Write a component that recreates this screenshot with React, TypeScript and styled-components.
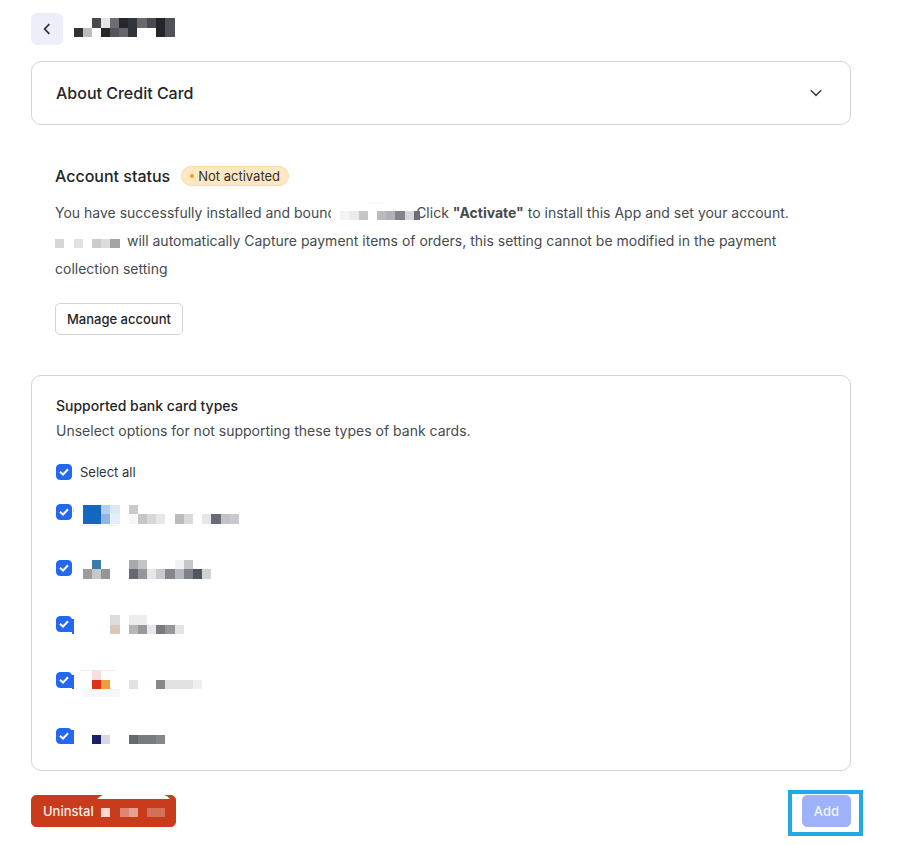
import React, { useState } from 'react';
import styled, { createGlobalStyle } from 'styled-components';

const GlobalStyle = createGlobalStyle`
  *, *::before, *::after { box-sizing: border-box; }
  body {
    margin: 0;
    background: #fff;
    color: #242628;
    font-family: Inter, "Liberation Sans", sans-serif;
    font-size: 14px;
    line-height: 20px;
  }
  button { font: inherit; cursor: pointer; }
`;

/* x, y, width, height, fill */
type Cell = [number, number, number, number, string];

const MosaicSvg = styled.svg`
  display: block;
  flex: none;
  overflow: visible;
`;

function Mosaic({ width, height, cells, className }: { width: number; height: number; cells: Cell[]; className?: string }) {
  return (
    <MosaicSvg className={className} width={width} height={height} shapeRendering="crispEdges" aria-hidden="true">
      {cells.map(([x, y, w, h, fill], i) => (
        <rect key={i} x={x} y={y} width={w} height={h} fill={fill} />
      ))}
    </MosaicSvg>
  );
}

const titleCells: Cell[] = [
  [18, 0, 9, 10, '#49494b'], [27, 0, 9, 10, '#e4e4e8'], [36, 0, 9, 10, '#6d6d72'], [45, 0, 9, 10, '#26282d'],
  [54, 0, 9, 10, '#323539'], [63, 0, 10, 10, '#6a6a6c'], [73, 0, 9, 10, '#494b4e'], [82, 0, 9, 19, '#23252a'],
  [91, 0, 10, 19, '#505257'], [0, 10, 9, 9, '#323232'], [9, 10, 9, 9, '#bbbcbc'], [27, 10, 9, 9, '#27272a'],
  [36, 10, 9, 9, '#54545c'], [45, 10, 9, 9, '#66666d'], [54, 10, 9, 9, '#303337'],
];

const boundCells: Cell[] = [
  [0, 0, 84, 18, '#fff'],
  [37, 0, 16, 2, '#fafafa'], [9, 9, 9, 9, '#f3f3f4'], [18, 9, 10, 9, '#ebebec'], [28, 9, 9, 9, '#c5c5c6'],
  [46, 9, 9, 9, '#bbbbbc'], [55, 9, 9, 9, '#b0b1b3'], [64, 9, 10, 9, '#838389'], [74, 9, 9, 9, '#d7d8de'],
  [83, 9, 6, 9, '#6c6c74'],
];

const appCells: Cell[] = [
  [0, 0, 9, 9, '#d6d6d6'], [19, 0, 9, 9, '#e2e2e2'], [37, 0, 9, 9, '#cacbcd'], [46, 0, 9, 9, '#dcdcdd'],
  [55, 0, 10, 9, '#a3a4a8'],
];

const uninstallCells: Cell[] = [
  [6, 0, 9, 9, '#fbd9d0'], [25, 0, 9, 9, '#dd8674'], [34, 0, 9, 9, '#e3a093'], [52, 0, 18, 9, '#d3705a'],
];

const cards: { id: string; name: string; cells: Cell[] }[] = [
  {
    id: 'card-1',
    name: 'Card type 1',
    cells: [
      [1, 8, 1, 4, '#d4d4d6'],
      [11, 5, 18, 19, '#1467c0'], [29, 5, 9, 9, '#b5cff0'], [38, 5, 10, 9, '#dfe7f3'], [29, 14, 9, 10, '#92b4e3'],
      [38, 14, 10, 10, '#e3f0fc'], [8, 25, 36, 1, '#f3f6f8'], [57, 5, 9, 9, '#c9c9ca'], [57, 14, 9, 10, '#f6f6f6'],
      [66, 14, 9, 10, '#c6c6c8'], [75, 14, 9, 10, '#d8d8d8'], [84, 14, 9, 10, '#e7e7e8'], [103, 14, 9, 10, '#babbbc'],
      [112, 14, 9, 10, '#d8d9d9'], [130, 14, 9, 10, '#e5e6e8'], [139, 14, 10, 10, '#696b76'], [149, 14, 9, 10, '#c2c3c8'],
      [158, 14, 9, 10, '#c8c9cb'],
    ],
  },
  {
    id: 'card-2',
    name: 'Card type 2',
    cells: [
      [20, 4, 9, 9, '#387aaa'], [11, 13, 9, 10, '#9c9c9c'], [20, 13, 9, 10, '#c8c8c9'], [29, 13, 9, 10, '#959596'],
      [57, 4, 9, 9, '#a7a8ab'], [66, 4, 9, 9, '#c3c4c5'], [103, 4, 9, 9, '#f1f2f3'], [112, 4, 9, 9, '#c5c7c8'],
      [57, 13, 9, 10, '#666a70'], [66, 13, 9, 10, '#94969b'], [75, 13, 9, 10, '#e5e6e8'], [84, 13, 9, 10, '#c9cacd'],
      [93, 13, 10, 10, '#85858b'], [103, 13, 9, 10, '#b5b7bb'], [112, 13, 9, 10, '#7b828a'], [121, 13, 9, 10, '#50555f'],
      [130, 13, 9, 10, '#d0d1d3'],
    ],
  },
  {
    id: 'card-3',
    name: 'Card type 3',
    cells: [
      [-3, 7, 5, 13, '#2468f2'], [0, 20, 2, 2, '#2468f2'],
      [38, 3, 10, 10, '#dcdcdd'], [38, 13, 10, 9, '#dbc8b9'], [57, 3, 18, 10, '#ededee'], [57, 13, 9, 9, '#b6b6b9'],
      [66, 13, 9, 9, '#97989d'], [75, 13, 9, 9, '#e5e7e9'], [84, 13, 9, 9, '#787b82'], [93, 13, 10, 9, '#96979b'],
      [103, 13, 9, 9, '#e3e3e5'],
    ],
  },
  {
    id: 'card-4',
    name: 'Card type 4',
    cells: [
      [-3, 7, 5, 13, '#2468f2'], [0, 20, 2, 1, '#2468f2'],
      [8, 2, 36, 1, '#f6eeee'], [20, 2, 9, 10, '#f8dede'], [20, 12, 9, 9, '#db321a'], [29, 12, 9, 9, '#f29b3b'],
      [11, 21, 37, 8, '#f7f7f8'], [57, 12, 9, 9, '#e0e1e2'], [84, 12, 9, 9, '#858989'], [93, 12, 28, 9, '#e0e1e2'],
      [121, 12, 9, 9, '#efeff0'],
    ],
  },
  {
    id: 'card-5',
    name: 'Card type 5',
    cells: [
      [-3, 6, 5, 14, '#2468f2'],
      [20, 11, 9, 9, '#192064'], [29, 11, 9, 9, '#d8d8e4'], [57, 11, 9, 9, '#666a6d'], [66, 11, 18, 9, '#777b82'],
      [84, 11, 9, 9, '#868888'],
    ],
  },
];

const Page = styled.main`
  padding: 13px 50px 18px 31px;
`;

const Header = styled.header`
  display: flex;
  align-items: center;
  gap: 11px;
  margin-bottom: 16px;
`;

const BackButton = styled.button`
  display: grid;
  place-items: center;
  width: 32px;
  height: 32px;
  padding: 0;
  border: 0;
  border-radius: 6px;
  background: #eceff8;
`;

const Title = styled.h1`
  margin: 0 0 3px;
`;

const Panel = styled.section`
  border: 1px solid #d4d5d8;
  border-radius: 10px;
`;

const AboutToggle = styled.button`
  display: flex;
  align-items: center;
  justify-content: space-between;
  width: 100%;
  padding: 19px 28px 19px 24px;
  border: 0;
  background: none;
  color: inherit;
  font-size: 16px;
  font-weight: 500;
  line-height: 24px;
`;

const Account = styled.section`
  padding: 39px 24px 40px;
`;

const AccountHeading = styled.div`
  display: flex;
  align-items: center;
  gap: 11px;
  margin-bottom: 11px;
`;

const Heading = styled.h2`
  margin: 0;
  font-size: 16px;
  font-weight: 500;
  line-height: 24px;
`;

const Badge = styled.span`
  display: inline-flex;
  align-items: center;
  gap: 4px;
  height: 20px;
  padding: 0 8px;
  border: 1px solid #f9dba5;
  border-radius: 10px;
  background: #fde8c1;
  color: #33312f;
  font-size: 13px;
`;

const Dot = styled.span`
  width: 4px;
  height: 4px;
  border-radius: 50%;
  background: #f5962a;
`;

const Description = styled.p`
  margin: 0 0 20px;
  color: #474a4e;
  line-height: 28px;
`;

const BoundMosaic = styled(Mosaic)`
  display: inline-block;
  position: relative;
  margin: 0 0 0 -5px;
  vertical-align: -2px;
`;

const AppMosaic = styled(Mosaic)`
  display: inline-block;
  margin-right: 3px;
  vertical-align: -2px;
`;

const Button = styled.button<{ $tone: 'plain' | 'danger' | 'primary' }>`
  display: inline-flex;
  align-items: center;
  height: 32px;
  padding: 0 11px;
  border: 1px solid ${({ $tone }) => ({ plain: '#d0d3d9', danger: '#c83b1b', primary: '#9db2fa' })[$tone]};
  border-radius: 5px;
  background: ${({ $tone }) => ({ plain: '#fff', danger: '#c83b1b', primary: '#9db2fa' })[$tone]};
  color: ${({ $tone }) => ({ plain: '#242628', danger: '#fdeeea', primary: '#f1f4ff' })[$tone]};
  font-size: 13px;
  font-weight: 500;
`;

const CardTypes = styled(Panel)`
  padding: 17px 24px 22px;
`;

const SmallHeading = styled.h2`
  margin: 0;
  font-size: 14px;
  font-weight: 500;
  line-height: 25px;
`;

const Hint = styled.p`
  margin: 0 0 17px;
  color: #474a4e;
  line-height: 25px;
`;

const CardList = styled.ul`
  display: grid;
  gap: 32px;
  margin: 16px 0 0;
  padding: 0;
  list-style: none;
`;

const CheckLabel = styled.label<{ $gap: number }>`
  display: flex;
  align-items: center;
  gap: ${({ $gap }) => $gap}px;
  height: 24px;
  color: #303336;
  font-size: 13px;
`;

const CheckShell = styled.span`
  display: grid;
  width: 16px;
  height: 16px;
  > * { grid-area: 1 / 1; }
`;

const CheckInput = styled.input`
  appearance: none;
  width: 16px;
  height: 16px;
  margin: 0;
  border: 1px solid #c4c8d0;
  border-radius: 4px;
  background: #fff;
  &:checked { border-color: #2468f2; background: #2468f2; }
`;

const CheckMark = styled.svg`
  pointer-events: none;
  z-index: 1;
`;

const Footer = styled.footer`
  display: flex;
  align-items: center;
  justify-content: space-between;
  margin-top: 24px;
`;

const UninstallButton = styled(Button)`
  position: relative;
  padding-right: 10px;
`;

const UninstallBite = styled.svg`
  position: absolute;
  top: -1px;
  right: 4px;
`;

const UninstallMosaic = styled(Mosaic)`
  margin: 2px 0 0 1px;
`;

const Highlight = styled.div`
  position: relative;
  &::after {
    content: '';
    position: absolute;
    inset: -5px -12px -9px -14px;
    border: 4px solid #21a9e6;
    pointer-events: none;
  }
`;

function Checkbox({ checked, onChange, label }: { checked: boolean; onChange: (v: boolean) => void; label?: string }) {
  return (
    <CheckShell>
      <CheckInput type="checkbox" aria-label={label} checked={checked} onChange={(e) => onChange(e.target.checked)} />
      <CheckMark width="16" height="16" viewBox="0 0 16 16" fill="none" aria-hidden="true">
        {checked && <path d="M4 7.8 7 10.6 12 5.2" stroke="#fff" strokeWidth="2" />}
      </CheckMark>
    </CheckShell>
  );
}

export default function App() {
  const [selected, setSelected] = useState<string[]>(cards.map((c) => c.id));
  const toggle = (id: string, on: boolean) => setSelected((s) => (on ? [...s, id] : s.filter((x) => x !== id)));

  return (
    <>
      <GlobalStyle />
      <Page>
        <Header>
          <BackButton type="button" aria-label="Back">
            <svg width="16" height="16" viewBox="0 0 16 16" fill="none" aria-hidden="true">
              <path d="M10.3 3.2 5.7 8l4.6 4.8" stroke="#30343c" strokeWidth="1.8" />
            </svg>
          </BackButton>
          <Title>
            <Mosaic width={101} height={19} cells={titleCells} />
          </Title>
        </Header>

        <Panel>
          <AboutToggle type="button" aria-expanded="false">
            About Credit Card
            <svg width="12" height="12" viewBox="0 0 12 12" fill="none" aria-hidden="true">
              <path d="M.8 3.2 6 8.4l5.2-5.2" stroke="#3c4046" strokeWidth="1.5" />
            </svg>
          </AboutToggle>
        </Panel>

        <Account>
          <AccountHeading>
            <Heading>Account status</Heading>
            <Badge>
              <Dot />
              Not activated
            </Badge>
          </AccountHeading>
          <Description>
            You have successfully installed and bound
            <BoundMosaic width={85} height={18} cells={boundCells} />
            Click <b>"Activate"</b> to install this App and set your account.
            <br />
            <AppMosaic width={65} height={9} cells={appCells} /> will automatically Capture payment items of orders, this
            setting cannot be modified in the payment collection setting
          </Description>
          <Button type="button" $tone="plain">Manage account</Button>
        </Account>

        <CardTypes>
          <SmallHeading>Supported bank card types</SmallHeading>
          <Hint>Unselect options for not supporting these types of bank cards.</Hint>
          <CheckLabel $gap={8}>
            <Checkbox
              checked={selected.length === cards.length}
              onChange={(on) => setSelected(on ? cards.map((c) => c.id) : [])}
            />
            Select all
          </CheckLabel>
          <CardList>
            {cards.map((card) => (
              <li key={card.id}>
                <CheckLabel $gap={0}>
                  <Checkbox label={card.name} checked={selected.includes(card.id)} onChange={(on) => toggle(card.id, on)} />
                  <Mosaic width={167} height={24} cells={card.cells} />
                </CheckLabel>
              </li>
            ))}
          </CardList>
        </CardTypes>

        <Footer>
          <UninstallButton type="button" $tone="danger">
            Uninstal
            <UninstallMosaic width={70} height={9} cells={uninstallCells} />
            <UninstallBite width="74" height="4" viewBox="0 0 74 4" aria-hidden="true">
              <path d="M6 0H67Q71 1 73 4H0Q3 1 6 0Z" fill="#fff" />
            </UninstallBite>
          </UninstallButton>
          <Highlight>
            <Button type="button" $tone="primary">Add</Button>
          </Highlight>
        </Footer>
      </Page>
    </>
  );
}
